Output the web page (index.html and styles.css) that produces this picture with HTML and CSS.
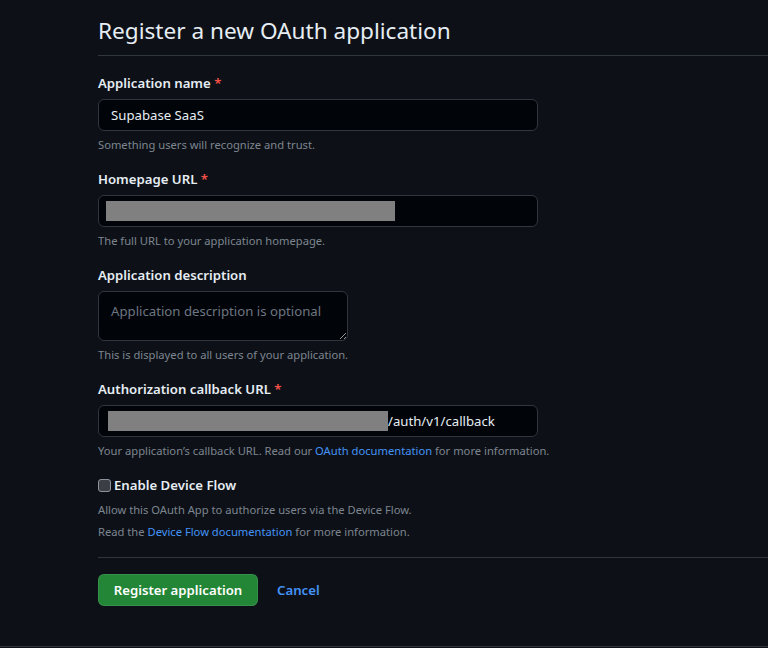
FILE: index.html
```html
<!DOCTYPE html>
<html lang="en">
<head>
<meta charset="utf-8">
<title>Register a new OAuth application</title>
<link rel="stylesheet" href="styles.css">
</head>
<body>
<main class="page">
  <div class="subhead">
    <h1 class="subhead-title">Register a new OAuth application</h1>
  </div>
  <form class="form">
    <div class="group">
      <label class="label">Application name <span class="req">*</span></label>
      <div class="field"><span class="value">Supabase SaaS</span></div>
      <p class="note">Something users will recognize and trust.</p>
    </div>
    <div class="group">
      <label class="label">Homepage URL <span class="req">*</span></label>
      <div class="field field-redacted"><span class="redact redact-home"></span></div>
      <p class="note">The full URL to your application homepage.</p>
    </div>
    <div class="group">
      <label class="label">Application description</label>
      <textarea class="textarea" placeholder="Application description is optional"></textarea>
      <p class="note">This is displayed to all users of your application.</p>
    </div>
    <div class="group">
      <label class="label">Authorization callback URL <span class="req">*</span></label>
      <div class="field field-redacted"><span class="redact redact-cb"></span><span class="value">/auth/v1/callback</span></div>
      <p class="note">Your application’s callback URL. Read our <a class="link" href="#">OAuth documentation</a> for more information.</p>
    </div>
    <div class="group group-check">
      <label class="check-label"><span class="checkbox"></span>Enable Device Flow</label>
      <p class="note note-check">Allow this OAuth App to authorize users via the Device Flow.</p>
      <p class="note note-check">Read the <a class="link" href="#">Device Flow documentation</a> for more information.</p>
    </div>
    <div class="actions">
      <button type="button" class="btn-primary">Register application</button>
      <a class="cancel" href="#">Cancel</a>
    </div>
  </form>
</main>
</body>
</html>
```
FILE: styles.css
```css
html, body {
  margin: 0;
  padding: 0;
  background: #0d1117;
}
body {
  font-family: "Noto Sans", "Open Sans", sans-serif;
  color: #e6edf3;
  font-size: 13.2px;
  line-height: 20px;
  height: 648px;
  overflow: hidden;
}
.page {
  padding-left: 98px;
  height: 647px;
  border-bottom: 1px solid #30363d;
  box-sizing: border-box;
}
.subhead {
  width: 670px;
  border-bottom: 1px solid #30363d;
  padding-top: 13px;
  padding-bottom: 6px;
  margin-bottom: 17px;
}
.subhead-title {
  margin: 0;
  font-size: 22.6px;
  font-weight: 400;
  line-height: 36px;
  color: #e6edf3;
}
.form {
  width: 670px;
}
.group {
  margin-bottom: 15px;
}
.label {
  display: block;
  font-weight: 600;
  font-size: 13.2px;
  line-height: 20px;
  margin-bottom: 6px;
}
.req {
  color: #f85149;
}
.field {
  width: 440px;
  height: 32px;
  box-sizing: border-box;
  border: 1px solid #30363d;
  border-radius: 6px;
  background: #010409;
  display: flex;
  align-items: center;
  padding: 0 12px;
  color: #e6edf3;
  font-size: 13.2px;
}
.field-redacted {
  padding-left: 7px;
}
.redact {
  display: block;
  background: #808080;
  height: 20px;
  flex: none;
}
.redact-home {
  width: 289px;
}
.redact-cb {
  width: 280px;
  margin-left: 2px;
}
.textarea {
  display: block;
  width: 250px;
  height: 50px;
  box-sizing: border-box;
  border: 1px solid #30363d;
  border-radius: 6px;
  background: #010409;
  color: #e6edf3;
  font-family: inherit;
  font-size: 13.2px;
  line-height: 20px;
  padding: 9px 12px;
  margin: 0;
  resize: vertical;
}
.textarea::placeholder {
  color: #6e7681;
}
.note {
  margin: 5px 0 0;
  font-size: 11.2px;
  line-height: 18px;
  color: #7d8590;
}
.link {
  color: #4493f8;
  text-decoration: none;
}
.group-check {
  margin-bottom: 16px;
}
.check-label {
  display: flex;
  align-items: center;
  font-weight: 600;
  font-size: 13.2px;
  line-height: 20px;
}
.checkbox {
  width: 13px;
  height: 13px;
  box-sizing: border-box;
  border: 1px solid #8b949e;
  border-radius: 3px;
  background: #3b3f45;
  margin-right: 3px;
  flex: none;
}
.note-check {
  margin-top: 6px;
}
.note-check + .note-check {
  margin-top: 4px;
}
.actions {
  border-top: 1px solid #30363d;
  padding-top: 16px;
  display: flex;
  align-items: center;
}
.btn-primary {
  height: 32px;
  width: 160px;
  padding: 0;
  white-space: nowrap;
  background: #238636;
  color: #ffffff;
  border: 1px solid rgba(240, 246, 252, 0.1);
  border-radius: 6px;
  font-family: inherit;
  font-size: 13.2px;
  font-weight: 600;
  line-height: 20px;
}
.cancel {
  margin-left: 19px;
  color: #4493f8;
  font-weight: 600;
  text-decoration: none;
}
```
